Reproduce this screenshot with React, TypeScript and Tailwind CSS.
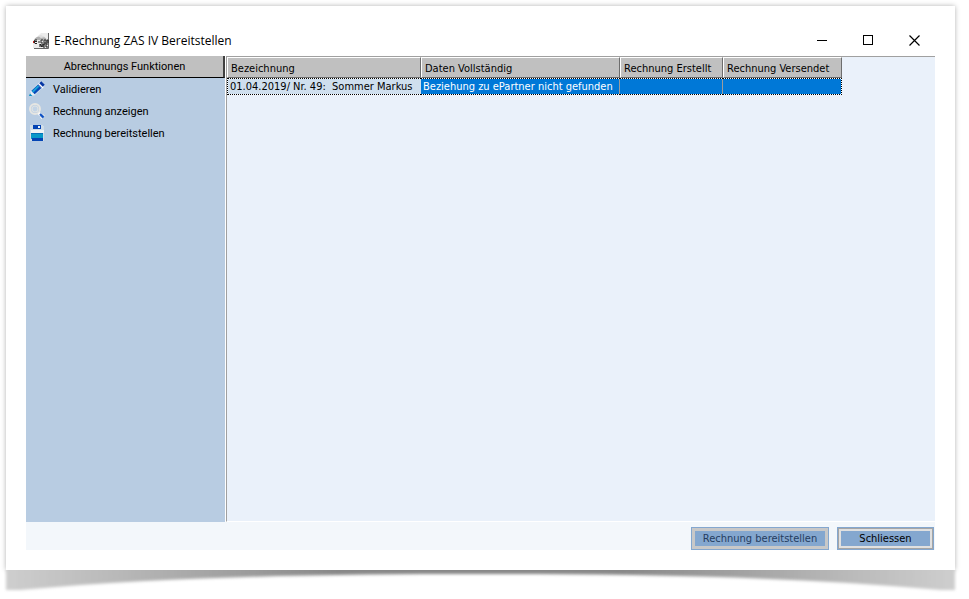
import type { ReactNode } from 'react';

interface SidebarAction {
    label: string;
    icon: ReactNode;
}

interface Invoice {
    id: number;
    description: string;
    status: string;
    created: string;
    sent: string;
}

const PencilIcon = () => (
    <svg width="16" height="16" viewBox="0 0 16 16" aria-hidden="true">
        <path d="M3 12.5L13.5 2.5" stroke="#dce7f2" strokeWidth="6" />
        <path d="M10.5 5.5l3.5-3.5" stroke="#0636a4" strokeWidth="5" />
        <path d="M9.5 2.5l4.5 4.5" stroke="#fff" strokeWidth="1.5" />
        <path d="M4 11.5L10.5 5.5" stroke="#0848b8" strokeWidth="5" />
        <path d="M3.5 11L9.5 5" stroke="#18a0d8" strokeWidth="2" />
        <path d="M2 10.5l3.5 3.5-4.5 1.5z" fill="#e8f0f6" />
        <path d="M1 12.5L3.5 15H0z" fill="#0a90c4" />
    </svg>
);

const MagnifierIcon = () => (
    <svg width="16" height="16" viewBox="0 0 16 16" aria-hidden="true">
        <circle cx="6" cy="6" r="5" fill="#b9cce2" stroke="#e6e6e2" strokeWidth="2" />
        <circle cx="6" cy="6" r="3" fill="#c3d4e6" stroke="#e0e4e4" strokeWidth="1.2" />
        <path d="M9.5 10l2 2" stroke="#f7f7f7" strokeWidth="3" />
        <path d="M11 11l3.5 3.5" stroke="#0b4fc4" strokeWidth="2" />
        <path d="M11 14l2 2M14.5 11.5l1 1" stroke="#f2f2f2" />
    </svg>
);

const DiskIcon = () => (
    <svg width="16" height="16" viewBox="0 0 16 16" shapeRendering="crispEdges" aria-hidden="true">
        <path d="M1 0h13l1 2v14H1z" fill="#d0dde8" />
        <path d="M4 0h8v4H4z" fill="#0444b4" />
        <path d="M9 1h2v2H9z" fill="#e8f2fa" />
        <path d="M2 5h13v3H2z" fill="#eef2f4" />
        <path d="M2 8h12v6H2z" fill="#0898c8" />
        <path d="M2 8h12v1H2z" fill="#0670b8" />
        <path d="M3 13h11v3H3z" fill="#0444b4" />
    </svg>
);

const AppIcon = () => (
    <svg width="16" height="16" viewBox="0 0 16 16" aria-hidden="true">
        <rect width="15" height="15" fill="#ececec" />
        <path d="M15.5 0v15.5H1" fill="none" stroke="#666" />
        <path d="M0 0h8L1 7H0z" fill="#fff" />
        <path d="M1 7a7 6 0 0 1 13 0z" fill="#b0b0b0" />
        <path d="M5 3l3-1 4 2-4 1z" fill="#dedede" />
        <path d="M1 8.5h3M4 10.5H2L1 8.5 2 7h2M5 9h2M10 7H8v3h2M11 10V7h2v3zM14 12V7h1v3" fill="none" stroke="#222" />
        <path d="M0 8h1v2H0z" fill="#c3221d" />
        <path d="M7 14v-3l2 3v-3M10 12h2M12 14h-2v-3h2M13 10v4h2" fill="none" stroke="#111" />
    </svg>
);

const actions: SidebarAction[] = [
    { label: 'Validieren', icon: <PencilIcon /> },
    { label: 'Rechnung anzeigen', icon: <MagnifierIcon /> },
    { label: 'Rechnung bereitstellen', icon: <DiskIcon /> },
];

const invoices: Invoice[] = [
    {
        id: 49,
        description: '01.04.2019/ Nr. 49:  Sommer Markus',
        status: 'Beziehung zu ePartner nicht gefunden',
        created: '',
        sent: '',
    },
];

const headCell = 'h-[21px] border-l border-t border-l-white border-t-white border-r border-b border-r-[#6d6d6d] border-b-[#6d6d6d] bg-[#c0c0c0] pt-0.5 pl-[3px] text-left font-normal whitespace-nowrap';
const bodyCell = 'h-[17px] border-y border-dotted border-black bg-[#0078d7] bg-clip-padding pl-[2px] text-white whitespace-pre';

function TitleBar() {
    return (
        <header className="flex h-[30px] items-center">
            <div className="ml-[7px]">
                <AppIcon />
            </div>
            <h1 className="ml-[5px] grow font-['Open_Sans',sans-serif] text-[12px] leading-4 whitespace-nowrap">E-Rechnung ZAS IV Bereitstellen</h1>
            <div className="-mr-0.5 flex pb-0.5">
                <button aria-label="Minimieren" className="flex h-7 w-[46px] items-center justify-center">
                    <svg width="11" height="11" viewBox="0 0 11 11" shapeRendering="crispEdges">
                        <path d="M0 5.5h10" stroke="#000" />
                    </svg>
                </button>
                <button aria-label="Maximieren" className="flex h-7 w-[46px] items-center justify-center">
                    <svg width="11" height="11" viewBox="0 0 11 11" shapeRendering="crispEdges">
                        <path d="M.5.5h9v9h-9z" fill="none" stroke="#000" />
                    </svg>
                </button>
                <button aria-label="Schließen" className="flex h-7 w-[46px] items-center justify-center">
                    <svg width="11" height="11" viewBox="0 0 11 11">
                        <path d="M.5.5l10 10M10.5.5l-10 10" stroke="#000" strokeWidth="1.2" />
                    </svg>
                </button>
            </div>
        </header>
    );
}

function Sidebar() {
    return (
        <nav className="flex w-[199px] shrink-0 flex-col bg-[#b8cce2] font-['Roboto','Liberation_Sans',sans-serif] text-[11px] leading-[14px]">
            <h2 className="h-[22px] border-r-2 border-b border-r-[#404040] border-b-black bg-[#c0c0c0] pt-1 text-center">Abrechnungs Funktionen</h2>
            <ul>
                {actions.map((action) => (
                    <li key={action.label}>
                        <button className="flex h-[22px] w-full items-center gap-2 pl-[3px] text-left">
                            {action.icon}
                            <span className="pt-px">{action.label}</span>
                        </button>
                    </li>
                ))}
            </ul>
        </nav>
    );
}

function InvoiceTable() {
    return (
        <table className="w-[615px] table-fixed border-separate border-spacing-0">
            <colgroup>
                <col className="w-[194px]" />
                <col className="w-[199px]" />
                <col className="w-[103px]" />
                <col className="w-[119px]" />
            </colgroup>
            <thead>
                <tr>
                    <th className={headCell}>Bezeichnung</th>
                    <th className={headCell}>Daten Vollständig</th>
                    <th className={headCell}>Rechnung Erstellt</th>
                    <th className={headCell}>Rechnung Versendet</th>
                </tr>
            </thead>
            <tbody>
                {invoices.map((invoice) => (
                    <tr key={invoice.id} className="bg-white">
                        <td className="h-[17px] border-y border-l border-dotted border-black bg-[#cfdfee] bg-clip-padding pl-[2px] whitespace-pre">{invoice.description}</td>
                        <td className={bodyCell}>{invoice.status}</td>
                        <td className={bodyCell}>
                            <div className="-ml-[3px] h-[15px] border-x border-[#9c9c9c]">{invoice.created}</div>
                        </td>
                        <td className={`${bodyCell} border-r`}>{invoice.sent}</td>
                    </tr>
                ))}
            </tbody>
        </table>
    );
}

// Curled page shadow below the window
function CurlShadow() {
    return (
        <svg className="block h-[29px] w-full" viewBox="0 0 949 29" preserveAspectRatio="none" overflow="visible" aria-hidden="true">
            <defs>
                <linearGradient id="curl" x1="0" x2="1" y1="0" y2="0">
                    <stop offset="0" stopColor="#cecece" />
                    <stop offset="0.12" stopColor="#b8b8b8" />
                    <stop offset="0.35" stopColor="#888" />
                    <stop offset="0.65" stopColor="#888" />
                    <stop offset="0.88" stopColor="#b8b8b8" />
                    <stop offset="1" stopColor="#cecece" />
                </linearGradient>
                <filter id="soft" x="-5%" y="-50%" width="110%" height="200%">
                    <feGaussianBlur stdDeviation="1.5" />
                </filter>
                <clipPath id="below">
                    <rect x="-6" y="0" width="970" height="29" />
                </clipPath>
            </defs>
            <g clipPath="url(#below)">
                <path d="M0-8H949V20H935C780 6 620 4 474 4S170 6 14 20H0Z" fill="url(#curl)" filter="url(#soft)" />
            </g>
        </svg>
    );
}

export default function App() {
    return (
        <div className="flex min-h-screen flex-col bg-white pt-1.5 pr-3.5 pl-1.5 text-black">
            <main className="flex grow flex-col bg-white px-5 pt-5 pb-5 shadow-[0_0_5px_rgba(0,0,0,0.3)]">
                <TitleBar />
                <div className="flex grow">
                    <Sidebar />
                    <section className="ml-px grow border-t border-b border-l border-t-[#a0a0a0] border-b-white border-l-[#a0a0a0] bg-[#eaf1fa] font-['DejaVu_Sans_Condensed','DejaVu_Sans',sans-serif] text-[11px] leading-[15px]">
                        <InvoiceTable />
                    </section>
                </div>
                <footer className="flex h-7 items-end justify-end gap-2 bg-[#f3f7fb] pr-px font-['DejaVu_Sans_Condensed','DejaVu_Sans',sans-serif] text-[11px] leading-[15px]">
                    <button disabled className="h-[23px] w-[138px] border border-[#84a7cf] bg-[#c8c8c8] p-[3px] text-[#243c60]">
                        <span className="block bg-[#84a7cf]">Rechnung bereitstellen</span>
                    </button>
                    <button className="h-[23px] w-[97px] border border-[#84a7cf] bg-[#a5a5a5] p-px">
                        <span className="block border-2 border-[#e0e0e0] bg-[#84a7cf]">Schliessen</span>
                    </button>
                </footer>
            </main>
            <CurlShadow />
        </div>
    );
}
